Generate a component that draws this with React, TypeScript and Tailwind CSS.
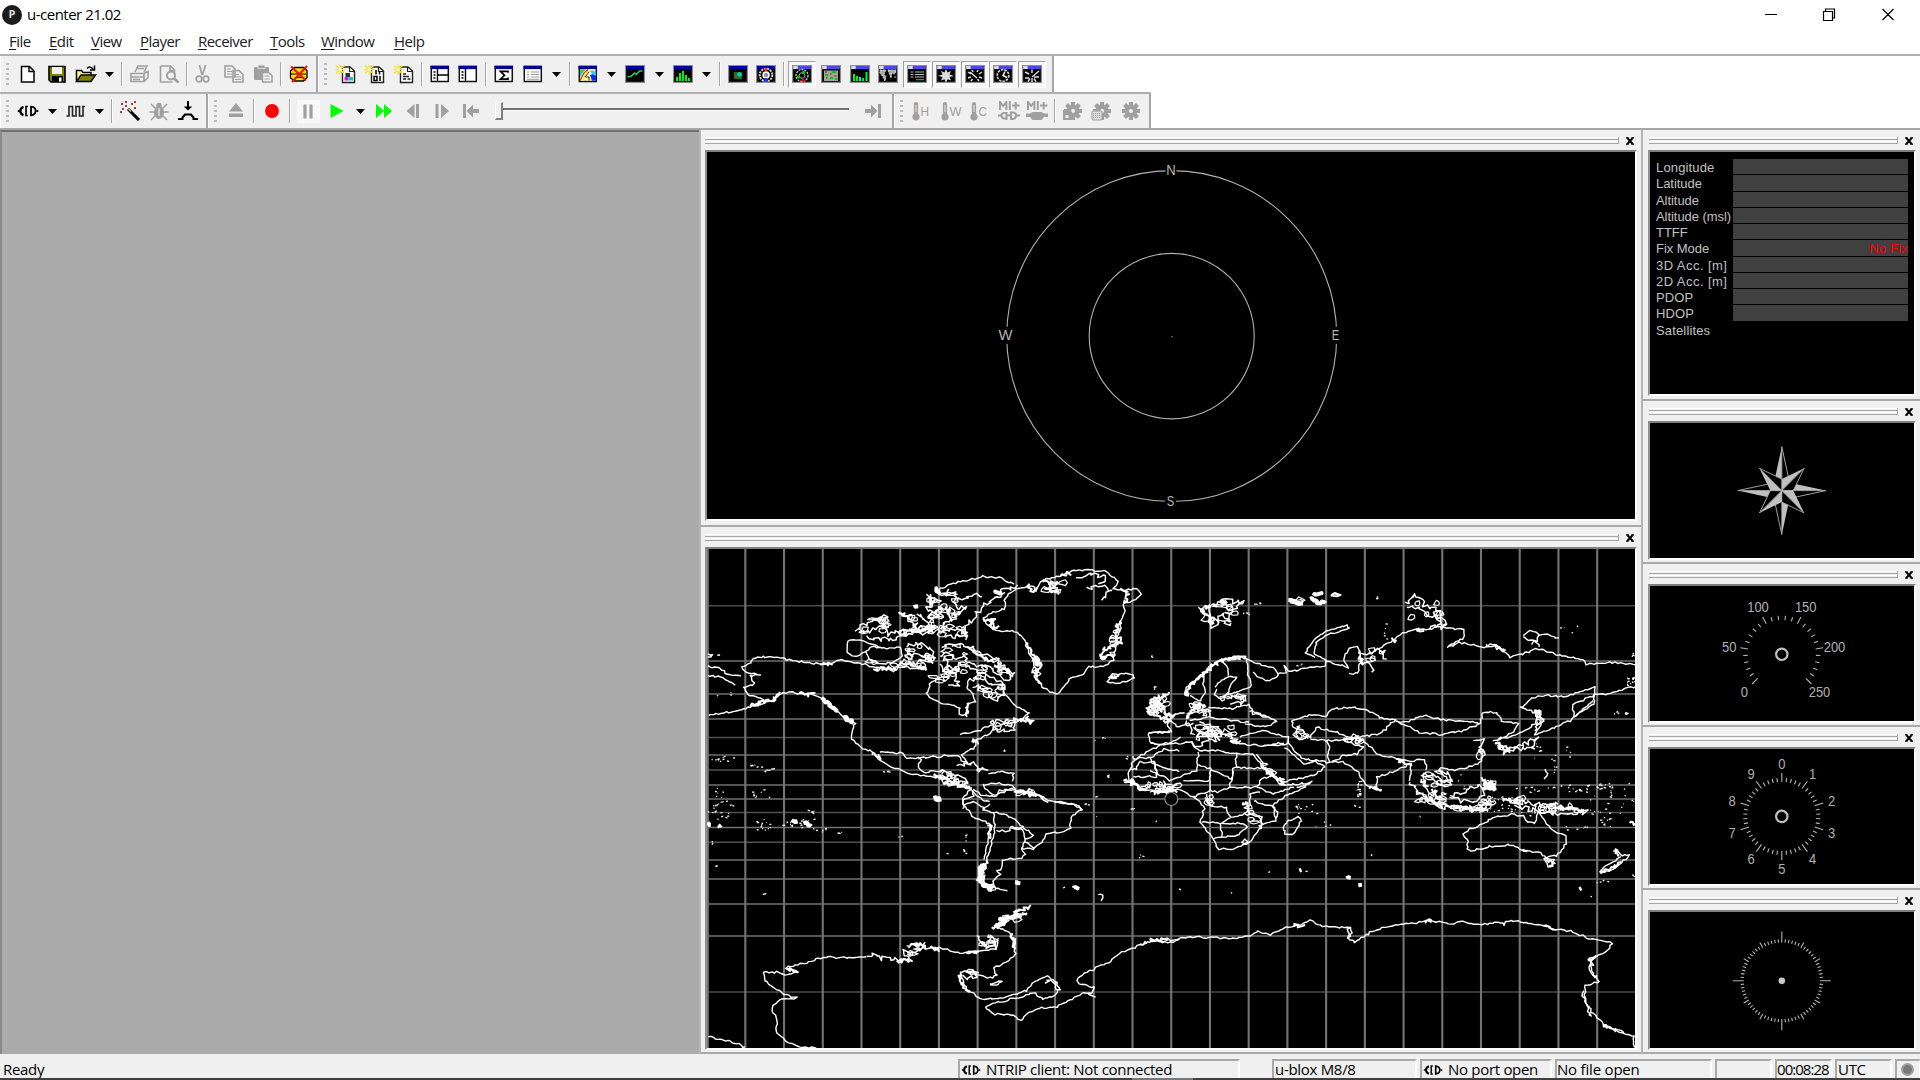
import React from "react";

/* ---------- helpers for the world map ---------- */

const makeRandom = (seed: number) => {
  let s = seed;
  return () => {
    s = (s * 1103515245 + 12345) % 2147483648;
    return s / 2147483648 - 0.5;
  };
};

/* Turns "x,y x,y | x,y x,y" polylines into a path with a jagged coast. */
const coast = (data: string, amp: number, step = 9) => {
  const rnd = makeRandom(data.length * 7 + 3);
  return data
    .split("|")
    .map((line) => {
      const pts = line.trim().split(/\s+/).map((p) => p.split(",").map(Number));
      let d = `M${pts[0][0]} ${pts[0][1]}`;
      for (let i = 1; i < pts.length; i++) {
        const [ax, ay] = pts[i - 1];
        const [bx, by] = pts[i];
        const n = Math.max(1, Math.round(Math.hypot(bx - ax, by - ay) / step));
        for (let k = 1; k <= n; k++) {
          const x = ax + ((bx - ax) * k) / n + rnd() * amp;
          const y = ay + ((by - ay) * k) / n + rnd() * amp;
          d += `L${x.toFixed(1)} ${y.toFixed(1)}`;
        }
      }
      return d;
    })
    .join("");
};

/* Small islands spread over boxes: [x, y, width, height, count]. */
const islets = (boxes: number[][]) => {
  const rnd = makeRandom(991);
  return boxes
    .map(([x, y, w, h, n]) =>
      Array.from({ length: n }, () => {
        const px = x + (rnd() + 0.5) * w;
        const py = y + (rnd() + 0.5) * h;
        return `M${px.toFixed(1)} ${py.toFixed(1)}l${(4 + rnd() * 6).toFixed(1)} ${(rnd() * 5).toFixed(1)}`;
      }).join("")
    )
    .join("");
};

/* Dense fjord and border areas: small closed loops inside boxes. */
const tangle = (boxes: number[][]) => {
  const rnd = makeRandom(4711);
  return boxes
    .map(([x, y, w, h, n]) =>
      Array.from({ length: Math.ceil(n * 0.75) }, () => {
        const cx = x + (rnd() + 0.5) * w;
        const cy = y + (rnd() + 0.5) * h;
        const rx = 10 + rnd() * 10;
        const ry = 7 + rnd() * 6;
        const pts = Array.from({ length: 7 }, (_, k) => {
          const a = (k / 7) * Math.PI * 2;
          const f = 1 + rnd() * 0.9;
          return `${(cx + Math.cos(a) * rx * f).toFixed(1)} ${(cy + Math.sin(a) * ry * f).toFixed(1)}`;
        });
        return `M${pts.join("L")}Z`;
      }).join("")
    )
    .join("");
};

type Tile = { at: string; line: string; rough?: string; heavy?: string; fat?: string; dots?: number[][]; knots?: number[][] };

const tiles: Tile[] = [
  {
    at: "translate(-7 -8.4) scale(0.33333)",
    line:
      "24,375 60,385 90,405 125,408 | 24,405 60,410 90,425 105,432 | 24,340 40,342 36,350 24,348 | 52,344 60,344 | 125,378 140,375 160,355 205,347 260,357 320,365 380,372 400,365 425,357 450,365 480,368 520,378 560,385 580,395 600,375 640,385 680,385 | 125,378 140,395 180,402 150,405 165,430 130,440 145,465 190,475 160,495 110,512 24,523 | 160,497 220,480 235,462 270,452 300,460 340,460 370,475 400,505 440,535 465,548 455,575 455,595 485,625 520,632 540,660 600,690 640,702 700,708 740,715 780,740 815,745 820,765 790,780 790,805 | 540,635 600,637 630,655 655,650 665,655 | 665,655 655,680 670,695 700,692 735,690 725,705 | 655,655 700,645 720,652 735,642 775,648 790,665 805,668 785,640 825,620 825,600 870,580 885,560 920,550 960,540 985,520 965,505 940,490 915,460 | 735,405 690,430 680,460 700,480 740,490 780,500 780,520 800,525 805,490 825,485 820,460 800,440 810,410 | 445,300 480,300 520,315 560,325 600,320 605,345 580,365 540,370 510,355 495,335 465,348 440,335 445,300 | 495,335 510,320 540,320 | 705,150 750,130 800,120 850,108 900,110 940,130 | 945,145 1000,135 1010,150 1025,120 1080,105 1130,88 1210,90 1255,120 1240,145 1270,150 1310,145 1322,160 1300,180 1270,190 1275,210 1262,240 1262,270 1250,290 1245,330 1240,360 1210,378 1165,380 1150,400 1110,412 1080,458 1050,455 1025,440 1010,410 1000,360 985,330 970,290 945,272 890,272 860,250 850,235 880,215 915,205 915,170 945,145 | 1220,425 1240,400 1300,400 1305,412 1260,428 1220,425 | 1415,540 1400,550 1415,572 1345,575 1350,608 1380,612 1415,605 1440,590 | 1380,615 1340,635 1300,660 1285,700 1290,725 1330,745 1400,755 1420,750 | 1290,685 1310,685 1315,665 1350,665 1420,690 1440,690 | 1300,708 1370,708 1362,660 | 1300,655 1360,650 1390,625 1440,630 | 850,735 890,728 940,735 950,750 1000,755 1040,775 1065,785 1110,788 1140,795 1145,810 | 865,700 900,692 940,700 940,720 | 820,745 850,765 890,765 900,750 945,745 | 780,582 840,568 880,550",
    rough:
      "885,160 915,150 945,140 | 915,155 860,190 830,215 815,240 800,260 800,295 | 465,272 500,245 560,225 565,245 500,275 470,272 | 500,285 540,297 600,290 600,275 570,280 560,260 | 600,215 630,235 650,260 610,270 605,285 640,275 | 680,160 700,175 685,200 700,215 720,200 730,235 | 715,160 760,160 765,200 800,205 770,220 755,250 725,250 | 705,150 740,165 750,150 | 770,180 820,165 845,165 | 720,265 780,270 795,290 730,285 | 650,220 680,240 700,270 660,280 640,250 | 620,320 650,310 680,315 700,335 690,360 660,350 620,330 | 725,320 760,310 810,315 850,340 890,360 940,400 920,420 900,400 860,380 820,370 790,350 760,350 735,335 725,350 | 735,345 745,380 770,385 790,370 830,395 870,405 915,440 | 720,370 740,395 760,405 780,430 750,430 | 810,415 850,420 880,430 915,435 915,460 890,475 860,460 850,445 820,435 | 600,370 640,370 680,350 700,365 | 720,690 760,700 800,720 790,740 750,720 720,712 | 770,675 820,670 860,690 830,685 | 870,545 900,540 940,545 940,565 890,568 870,545 | 1130,110 1170,95 1220,110 1200,130 | 1160,140 1200,135 1230,150 1210,175",
    heavy:
      "1340,515 1350,500 1370,510 1360,522 1340,515 | 1360,470 1380,470 1375,490 1390,500 | 1375,495 1400,520 1425,525 1395,545 | 1385,465 1405,455 | 1000,340 1020,370 1005,400 1020,430 | 985,310 1000,345 | 1260,240 1245,280 1265,300 1235,320 1210,325 1200,355 1240,345 | 1030,125 1070,130 1040,145 1080,155 | 1010,140 1000,150 980,135 | 1080,105 1115,95 | 1265,145 1285,155 1275,190 | 850,235 885,240 870,260 900,262 | 360,372 395,372 | 520,385 590,382 | 680,385 620,365 | 150,495 220,478 235,460 | 515,640 545,655 | 940,535 1000,545 980,530 | 800,490 800,520 | 815,600 835,605 | 700,705 760,712 | 1225,412 1260,405 | 960,755 1000,762 1030,768 | 520,240 560,232 | 600,215 620,225 | 630,270 700,270 | 740,200 755,240 | 690,165 690,205 | 885,372 935,402 | 800,320 880,365 | 300,460 340,462",
    fat: "365,472 395,500 410,512 | 430,530 460,545 | 1290,718 1300,726 | 705,775 720,775 | 645,192 652,198 | 705,145 720,155 | 885,157 905,157 | 1365,475 1368,492 | 1000,350 1015,375",
    knots: [[480, 235, 80, 45, 10], [600, 225, 110, 60, 22], [680, 160, 90, 90, 20], [715, 255, 85, 35, 9], [620, 310, 80, 50, 12], [735, 315, 60, 90, 14], [830, 350, 90, 60, 10], [820, 425, 90, 40, 8], [1010, 125, 80, 30, 5], [1235, 270, 20, 70, 7], [1000, 350, 15, 60, 5], [720, 695, 70, 40, 8], [880, 545, 60, 15, 5], [1350, 475, 50, 50, 6], [1310, 730, 110, 18, 7], [500, 360, 170, 20, 7], [700, 385, 80, 40, 6]],
    dots: [[35, 648, 70, 15, 10], [140, 672, 60, 10, 8], [190, 685, 30, 8, 6], [40, 740, 50, 55, 9], [150, 745, 60, 30, 8], [40, 450, 60, 40, 3], [1170, 592, 50, 12, 4], [1215, 702, 25, 10, 5], [520, 692, 60, 4, 4], [1270, 625, 30, 30, 4], [1340, 345, 15, 5, 2], [1350, 440, 15, 6, 4], [905, 630, 10, 3, 2]],
  },
  {
    at: "translate(443 -8.4) scale(0.33333)",
    line:
      "105,465 110,440 150,405 185,375 215,358 260,348 290,355 320,370 370,380 383,400 375,415 345,420 310,395 | 290,355 295,400 305,435 260,455 230,460 | 120,465 150,480 165,455 160,430 165,395 190,375 | 195,440 210,425 235,408 258,412 245,430 230,460 | 200,445 195,460 215,475 230,460 | 210,360 232,375 235,405 | 383,400 410,395 405,375 420,395 470,380 525,375 530,362 595,380 580,355 600,320 625,320 632,350 625,395 600,400 | 680,325 735,295 760,275 800,265 845,265 870,250 890,265 940,265 940,295 890,320 930,305 1000,320 1020,310 1050,320 1080,350 1120,340 1160,322 1230,345 1300,355 1310,370 1380,365 1457,370 | 495,350 465,340 490,295 530,270 590,255 598,265 540,280 500,305 490,335 530,362 | 1120,285 1140,270 1165,280 1160,300 1130,298 1120,285 | 1165,285 1190,280 1225,292 | 1145,312 1155,300 1170,318 | 1457,437 1400,450 1375,462 1340,460 1270,490 1270,530 1330,490 1335,440 1300,450 1250,468 1200,465 1160,465 1110,500 1150,515 1165,510 1175,545 1155,580 1190,570 1260,540 1275,525 1330,480 | 1165,520 1160,545 1130,570 1080,590 1030,600 | 970,600 1005,595 990,620 1005,640 990,665 950,680 915,688 875,680 865,690 900,720 905,735 870,735 850,715 820,700 825,740 850,770 | 425,540 470,525 530,525 545,505 605,500 650,505 690,530 735,540 690,580 620,590 590,590 560,575 500,560 480,590 460,570 430,560 425,540 | 735,540 770,545 820,525 880,538 950,540 990,550 940,570 870,582 810,575 760,550 735,540 | 990,550 1000,515 1040,515 1055,540 1105,550 1090,575 1040,600 | 580,665 600,675 620,690 650,735 680,742 680,710 750,685 780,670 785,700 780,720 | 640,600 680,640 740,655 790,660 825,655 830,690 | 415,600 430,630 460,655 500,660 530,665 580,665 | 320,640 345,680 395,725 440,715 490,705 525,680 495,662 460,670 430,640 405,620 | 340,615 400,605 | 530,600 540,625 530,645 540,665 | 480,595 530,600 590,600 | 590,600 640,620 620,640 580,645 545,665 | 270,590 330,570 380,580 415,590 410,612 340,615 270,610 255,600 | 285,550 330,560 370,550 378,540 330,520 300,510 | 0,755 50,750 65,745 95,750 130,770 165,800 150,845 190,895 205,925 250,925 290,910 320,880 335,850 380,840 370,795 400,770 450,745 485,725 400,735 345,690 310,640 240,640 220,630 150,630 130,620 125,605 60,610 0,610 | 0,690 60,720 140,690 145,635 | 20,705 15,665 0,655 | 145,672 180,685 245,715 250,685 260,680 258,640 | 260,682 345,682 | 250,690 240,740 200,755 180,750 130,770 | 100,720 180,720 182,690 | 180,720 180,755 | 240,740 320,740 330,720 370,700 | 320,740 370,760 430,740 | 330,755 300,760 300,790 285,820 240,830 230,800 180,795 170,760 | 155,845 210,848 240,830 | 210,848 218,890 190,895 | 218,890 260,885 290,860 280,848 215,850 | 275,905 285,898 292,906 282,912 275,905 | 285,820 330,830 335,850 | 370,800 310,780 | 440,740 470,735 | 410,845 445,828 455,840 430,880 405,880 400,860 410,845 | 940,880 960,865 1000,850 1030,830 1085,822 1120,825 1125,840 1155,850 1165,815 1190,850 1215,875 1245,885 1250,910 1220,945 1190,950 1165,935 1130,930 1110,925 1080,912 1020,918 965,930 950,925 955,905 940,880 | 1180,955 1210,955 1205,975 1195,978 1180,955 | 1395,925 1415,945 1440,945 1385,990 1350,995 1355,985 1410,950 | 1155,790 1155,820 | 175,500 240,505 300,490 310,520 370,535 | 110,520 175,505 180,530 120,540 | 180,530 250,540 300,545 | 75,520 105,515 | 60,575 0,575 | 60,535 80,560 130,550 | 1185,685 1195,700 1180,718",
    rough:
      "145,200 180,200 190,260 210,220 240,245 230,215 270,195 280,185 220,180 200,195 160,205 | 160,220 200,240 250,250 | 765,185 800,165 820,195 870,210 875,240 830,220 800,200 770,205 | 630,330 660,345 680,325 705,335 705,355 | 625,360 660,375 670,390 | 850,215 880,235 890,262 840,260 | 1010,310 1060,330 | 130,560 160,580 200,600 190,560 230,580 260,600 | 150,545 200,555 220,585 170,570 | 110,540 130,580 | 125,610 150,620 170,600 | 450,555 430,580 460,595 480,590 | 780,725 800,750 840,785 880,800 940,805 1010,812 | 800,755 840,770 875,795 820,770 | 900,765 950,755 990,730 1000,750 985,785 930,780 900,765 | 1000,780 1020,790 1010,805 | 1090,780 1150,790 1230,800 1310,815 1250,815 1200,820 1160,810 1100,795 | 870,685 890,700 910,720 870,720 850,700 | 1060,635 1090,625 1150,620 1160,590 1140,605 1080,625 1060,635 | 1155,515 1180,540 1150,570 | 230,470 290,470 280,490 240,490 | 290,790 300,820 330,820 330,870 | 165,770 185,800 | 40,720 40,750 80,730 | 1170,805 1230,790 | 370,800 380,835",
    heavy:
      "110,450 150,405 210,360 290,350 | 130,490 165,495 | 140,500 110,530 | 0,490 20,480 40,510 | 0,515 40,535 60,520 | 580,595 620,590 640,605 | 740,655 780,672 | 1020,720 1030,745 1000,715 | 845,745 870,775 | 725,295 740,305 | 800,265 820,270 | 1040,315 1060,330 | 630,345 640,370 | 1040,605 1060,625 | 1060,640 1080,625 | 395,715 400,730 | 280,785 300,790 | 660,740 690,745 | 1120,925 1135,930 | 860,790 1010,808 | 1060,775 1110,785 | 1440,848 1457,852 | 1395,925 1405,945 | 1200,795 1300,812 | 170,560 205,595 | 240,600 270,605 | 815,715 830,740 | 345,685 400,728",
    fat: "480,175 525,190 | 490,165 515,160 | 415,178 455,188 | 210,185 230,185 | 150,210 165,215 | 175,240 190,250 | 1000,725 1035,745 | 1000,745 1030,740 | 745,660 755,665 | 107,452 115,462 | 130,495 150,500 | 10,480 20,492 | 245,605 265,600 | 1155,515 1165,515 | 1395,928 1400,932",
    knots: [[150, 195, 110, 50, 8], [430, 175, 20, 10, 3], [550, 158, 10, 8, 2], [650, 325, 50, 40, 5], [775, 185, 100, 55, 7], [115, 480, 60, 50, 8], [130, 550, 120, 45, 16], [200, 465, 85, 28, 6], [5, 475, 30, 40, 5], [445, 565, 30, 25, 4], [590, 585, 45, 20, 5], [825, 695, 70, 40, 8], [845, 750, 35, 35, 6], [805, 760, 60, 20, 5], [995, 760, 30, 40, 7], [1010, 720, 20, 20, 5], [1045, 772, 70, 15, 5], [885, 798, 120, 8, 6], [1150, 795, 140, 18, 9], [1045, 610, 30, 20, 4], [1160, 520, 12, 40, 4], [985, 605, 10, 50, 3], [170, 770, 15, 20, 3], [5, 730, 80, 15, 6], [295, 795, 30, 55, 5], [335, 650, 50, 60, 3]],
    dots: [[305, 185, 50, 8, 4], [620, 720, 12, 50, 18], [430, 790, 70, 30, 12], [700, 245, 10, 60, 5], [1190, 620, 80, 90, 12], [1140, 600, 40, 70, 6], [1080, 735, 240, 20, 26], [1320, 730, 130, 90, 26], [1340, 730, 50, 15, 12], [1350, 820, 30, 40, 10], [1240, 855, 80, 15, 6], [1390, 515, 60, 6, 8], [1230, 255, 60, 22, 4], [490, 840, 70, 20, 4], [430, 370, 25, 6, 3], [1010, 770, 100, 45, 26], [1110, 775, 100, 50, 16], [920, 700, 30, 60, 5], [655, 940, 10, 8, 2], [610, 795, 20, 8, 3], [800, 825, 15, 4, 2], [1430, 410, 25, 30, 14], [1445, 340, 12, 10, 6], [270, 215, 25, 6, 4], [675, 168, 6, 6, 4]],
  },
  {
    at: "translate(-7 231.600) scale(0.33333)",
    line:
      "815,20 790,55 790,75 820,110 870,130 865,180 850,240 | 1065,63 1110,68 1145,85 1112,110 1110,140 1090,152 1040,160 1030,180 1000,205 965,205 975,220 965,230 930,235 910,240 905,265 890,270 900,280 880,300 885,325 920,328 | 880,95 885,150 870,200 860,245 | 790,75 820,65 845,75 850,90 905,98 950,120 968,140 930,140 930,152 890,150 | 930,140 970,150 975,175 1000,165 985,150 965,140 | 975,175 965,205 | 975,185 1000,200 | 870,70 850,85 | 850,10 860,30 890,45 940,20 | 815,30 840,55 870,65 | 190,575 240,575 265,585 290,570 255,562 320,545 370,530 440,532 500,527 | 190,575 195,600 250,640 290,652 240,658 215,680 230,720 230,755 260,785 300,800 350,802 | 24,768 100,785 136,800 | 640,505 720,500 780,518 840,510 890,505 895,470 | 895,440 930,455 945,490 945,520 920,545 880,562 890,585 870,592 840,585 820,570 | 780,575 800,625 840,655 900,652 980,630 1000,605 1040,585 1070,605 1080,625 1065,645 1030,655 1000,635 960,650 870,670 855,680 880,700 940,702 960,718 1010,682 1070,680 1110,660 1145,637 1175,640 1180,620 1135,610 1130,600 1160,575 1225,545 1265,515 1320,495 1340,485 1400,475 1415,488 1440,478 | 870,610 905,600 885,615 870,610 | 1195,342 1210,345 1205,362 | 335,92 345,98",
    rough:
      "500,527 530,520 545,535 570,530 600,540 630,540 605,515 640,510 680,500 | 620,495 670,490 | 830,465 850,490 890,500 880,475 860,460 | 780,575 820,575 830,590 790,590 | 1035,608 1060,605 1080,625 | 950,35 1000,40 1040,60 | 1165,640 1180,645 | 1320,490 1345,485 | 845,490 870,500",
    heavy:
      "260,565 290,570 | 590,540 635,540 | 630,490 675,495 | 875,440 910,430 | 780,580 785,610 805,635 | 895,445 905,420 985,395 | 940,395 995,380 | 730,5 815,20 | 870,130 870,170 | 860,240 845,280 | 935,460 945,510 | 1380,475 1400,478 | 690,502 715,508 | 800,515 835,512 | 945,30 1000,40 | 1270,0 1300,10 1340,30 | 1360,35 1430,30",
    fat: "848,250 838,290 850,315 | 842,280 850,310 880,330 | 840,260 845,300 | 900,420 960,402 | 885,440 920,420 | 700,52 720,56 | 275,118 290,122 | 310,128 335,135 | 60,140 65,130 | 24,125 30,135 | 945,305 960,307 | 1120,322 1135,325 | 1292,0 1300,4",
    knots: [[842, 255, 8, 50, 4], [855, 318, 22, 8, 3], [845, 470, 35, 25, 5], [615, 498, 45, 28, 4], [900, 410, 55, 12, 4], [955, 32, 40, 8, 4], [755, 2, 50, 10, 3], [802, 570, 18, 10, 2]],
    dots: [[24, 60, 80, 60, 18], [150, 115, 200, 35, 26], [360, 145, 20, 15, 5], [400, 155, 50, 4, 4], [40, 255, 12, 6, 3], [185, 338, 10, 3, 2], [720, 180, 80, 40, 5], [560, 168, 45, 4, 2], [790, 165, 8, 5, 2], [1085, 318, 60, 8, 4], [1310, 218, 20, 15, 3], [1290, 85, 10, 4, 2], [1150, 70, 14, 4, 3], [1365, 120, 6, 3, 1], [24, 180, 15, 12, 3], [1185, 48, 5, 90, 2], [320, 88, 20, 8, 3], [270, 115, 70, 20, 10]],
  },
  {
    at: "translate(443 311.600) scale(0.33333)",
    line:
      "0,240 60,245 90,232 150,230 250,233 300,225 325,212 360,225 400,203 450,195 480,180 520,198 600,202 605,215 590,230 615,245 660,215 720,195 800,187 840,180 905,190 940,182 970,192 1020,190 1035,183 1065,192 1068,182 1105,182 1190,195 1220,208 1260,210 1320,235 1385,247 1370,272 1320,295 1320,330 1350,362 1305,375 1305,425 1330,460 1360,490 1400,510 1452,528 1452,560",
    rough: "0,240 45,240 | 1320,295 1335,290 1320,320 1340,355 | 1302,390 1305,425 1325,462 1310,460 | 1360,490 1395,508 1420,515 | 600,202 595,230 | 1180,195 1215,205",
    heavy: "825,182 848,180 | 430,197 460,193 | 1185,0 1210,5 1200,18 | 1350,35 1375,30 1410,5 | 1360,495 1370,497 | 1315,295 1325,300",
    fat: "592,45 602,50 | 625,74 632,76 | 1288,86 1293,86 | 448,30 452,30",
    dots: [[85, 84, 8, 3, 2], [242, 95, 5, 2, 1], [352, 34, 6, 2, 1], [460, 30, 10, 2, 1], [1340, 60, 35, 10, 4], [1320, 105, 5, 2, 1], [1445, 42, 8, 8, 3]],
  },
];

const meridians = Array.from({ length: 24 }, (_, i) => (i === 0 ? 0.8 : -0.4 + i * 38.72));
const parallels: [number, string][] = [
  [56.8, "#4a4a4a"], [111.9, "#707070"], [144.9, "#707070"], [169.9, "#707070"], [188.6, "#505050"],
  [205.9, "#707070"], [220.9, "#505050"], [235.9, "#707070"], [249.9, "#707070"], [263.6, "#505050"],
  [278.6, "#707070"], [293.3, "#505050"], [310.9, "#707070"], [329.9, "#707070"], [354.9, "#707070"],
  [386.9, "#707070"], [442.9, "#4a4a4a"],
];

function WorldMap() {
  return (
    <svg className="block h-full w-full" viewBox="0 0 928 499" preserveAspectRatio="none" fill="none">
      {parallels.map(([y, c]) => (
        <line key={y} x1="0" x2="928" y1={y} y2={y} stroke={c} strokeWidth="1.5" />
      ))}
      {meridians.map((x) => (
        <line key={x} x1={x} x2={x} y1="0" y2="499" stroke="#747474" strokeWidth="2.1" />
      ))}
      {tiles.map((t) => (
        <g key={t.at} transform={t.at} stroke="#fff" strokeLinejoin="round">
          <path d={coast(t.line, 6, 8)} strokeWidth="4.2" />
          {t.rough && <path d={coast(t.rough, 15, 7)} strokeWidth="4.4" />}
          {t.knots && <path d={tangle(t.knots)} strokeWidth="3.6" />}
          {t.heavy && <path d={coast(t.heavy, 13, 4)} strokeWidth="6" />}
          {t.fat && <path d={coast(t.fat, 9, 5)} strokeWidth="12" />}
          {t.dots && <path d={islets(t.dots)} strokeWidth="3.8" />}
        </g>
      ))}
      <circle cx="464.3" cy="250" r="6.5" fill="#000" stroke="#8a8a8a" strokeWidth="1.2" />
    </svg>
  );
}

/* ---------- gauges ---------- */

const polar = (cx: number, cy: number, r: number, deg: number) => {
  const a = (deg * Math.PI) / 180;
  return [cx + r * Math.sin(a), cy - r * Math.cos(a)];
};

const tick = (cx: number, cy: number, r1: number, r2: number, deg: number) => {
  const [a, b] = polar(cx, cy, r1, deg);
  const [c, d] = polar(cx, cy, r2, deg);
  return `M${a.toFixed(2)} ${b.toFixed(2)}L${c.toFixed(2)} ${d.toFixed(2)}`;
};

function Num({ x, y, v }: { x: number; y: number; v: string }) {
  return (
    <text x={x} y={y + 5.3} fontSize="15.5" textAnchor="middle" textLength={v.length * 7.2} lengthAdjust="spacingAndGlyphs" fill="#b0b0b0" fontFamily="'Liberation Sans', sans-serif">
      {v}
    </text>
  );
}

function Gauge({ children }: { children: React.ReactNode }) {
  return (
    <svg className="block h-full w-full" viewBox="0 0 264 135" preserveAspectRatio="none" fill="none">
      {children}
    </svg>
  );
}

function Compass() {
  const cx = 131.8, cy = 67.6;
  const shape: React.ReactNode[] = [];
  [0, 90, 180, 270].forEach((a) => {
    const tip = polar(cx, cy, 44, a), l = polar(cx, cy, 15, a - 26), r = polar(cx, cy, 15, a + 26);
    shape.push(<polygon key={`l${a}`} points={`${tip} ${l} ${cx},${cy}`} fill="#c0c0c0" />);
    shape.push(<polygon key={`r${a}`} points={`${tip} ${r} ${cx},${cy}`} fill="#000" stroke="#b0b0b0" strokeWidth="0.9" />);
  });
  [45, 135, 225, 315].forEach((a) => {
    const tip = polar(cx, cy, 31.6, a), l = polar(cx, cy, 11.5, a - 45), r = polar(cx, cy, 11.5, a + 45);
    shape.push(<polygon key={`dl${a}`} points={`${tip} ${l} ${cx},${cy}`} fill="#c0c0c0" />);
    shape.push(<polygon key={`dr${a}`} points={`${tip} ${r} ${cx},${cy}`} fill="#000" stroke="#b0b0b0" strokeWidth="0.9" />);
  });
  return <Gauge>{shape}</Gauge>;
}

function Speed() {
  const cx = 131.8, cy = 68.3;
  const d = Array.from({ length: 26 }, (_, i) => tick(cx, cy, 34.2, i % 5 === 0 ? 42 : 38.6, -135 + i * 10.8)).join("");
  return (
    <Gauge>
      <path d={d} stroke="#b4b4b4" strokeWidth="1.1" />
      <circle cx={cx} cy={cy} r="5.7" stroke="#c0c0c0" strokeWidth="2.2" />
      <Num x={94.3} y={105.8} v="0" />
      <Num x={79.3} y={61} v="50" />
      <Num x={108} y={21} v="100" />
      <Num x={155.7} y={21} v="150" />
      <Num x={184.5} y={61} v="200" />
      <Num x={169.5} y={105.8} v="250" />
    </Gauge>
  );
}

function Clock() {
  const cx = 131.8, cy = 67.4;
  const d = Array.from({ length: 50 }, (_, i) => tick(cx, cy, 34.5, i % 5 === 0 ? 43.5 : 38.6, i * 7.2)).join("");
  return (
    <Gauge>
      <path d={d} stroke="#b4b4b4" strokeWidth="1.1" />
      <circle cx={cx} cy={cy} r="5.7" stroke="#c0c0c0" strokeWidth="2.2" />
      {Array.from({ length: 10 }, (_, i) => {
        const [x, y] = polar(cx, cy, 52.3, i * 36);
        return <Num key={i} x={x} y={y} v={String(i)} />;
      })}
    </Gauge>
  );
}

function Bearing() {
  const cx = 131.8, cy = 68.3;
  const d = Array.from({ length: 72 }, (_, i) => tick(cx, cy, 38, i % 18 === 0 ? 49 : i % 6 === 0 ? 44 : 41.3, i * 5)).join("");
  return (
    <Gauge>
      <path d={d} stroke="#b4b4b4" strokeWidth="1.1" />
      <circle cx={cx} cy={cy} r="3.3" fill="#c8c8c8" />
    </Gauge>
  );
}

function Sky() {
  const cx = 464.7, cy = 183.6;
  return (
    <svg className="block h-full w-full" viewBox="0 0 928 366" preserveAspectRatio="none" fill="none">
      <circle cx={cx} cy={cy} r="165" stroke="#b0b0b0" strokeWidth="1.1" />
      <circle cx={cx} cy={cy} r="82.5" stroke="#b0b0b0" strokeWidth="1.1" />
      <rect x={cx - 0.5} y={cy} width="1.4" height="1.2" fill="#888" />
      {([["N", 464, 17.5], ["S", 463.5, 347.5], ["W", 298.5, 182.3], ["E", 628.5, 182.3]] as [string, number, number][]).map(([t, x, y]) => (
        <React.Fragment key={t}>
          <rect x={x - 5.5} y={y - 8} width="11" height="17" fill="#000" />
          <text x={x} y={y + 5.3} fontSize="15.5" textAnchor="middle" textLength={t === "W" ? 14 : t === "N" ? 9.5 : 7.5} lengthAdjust="spacingAndGlyphs" fill="#b4b4b4" fontFamily="'Liberation Sans', sans-serif">
            {t}
          </text>
        </React.Fragment>
      ))}
    </svg>
  );
}

/* ---------- docking panel ---------- */

function Dock({ className, tight, body, children }: { className: string; tight?: boolean; body: string; children: React.ReactNode }) {
  return (
    <section className={`flex flex-col border-b-2 border-l-2 border-b-[#a9a9a9] border-l-[#b4b4b4] bg-[#f0f0f0] ${className}`}>
      <header className={`flex h-5 shrink-0 items-center gap-[6px] pt-px pr-1.5 ${tight ? "pl-[6px]" : "pl-1"}`}>
        <div className="flex h-[7px] flex-1 flex-col justify-between border-r border-[#a9a9a9]">
          <div className="h-[3px] border-t border-b border-t-white border-b-[#a6a6a6]" />
          <div className="h-[3px] border-t border-b border-t-white border-b-[#a6a6a6]" />
        </div>
        <svg className="h-[8px] w-[10px]" viewBox="0 0 10 8" stroke="#000">
          <path d="M2.3 1L7.7 7M7.7 1L2.3 7" strokeWidth="1.9" />
          <path d="M1 .9h2.6M6.4 .9H9M1 7.1h2.6M6.4 7.1H9" strokeWidth="1.1" />
        </svg>
      </header>
      <div className={`mr-1 min-h-0 flex-1 ${body} border-t-2 border-r-2 border-b-2 border-l-2 border-t-[#808080] border-r-white border-b-white border-l-[#909090] bg-black`}>
        {children}
      </div>
    </section>
  );
}

const fields = ["Longitude", "Latitude", "Altitude", "Altitude (msl)", "TTFF", "Fix Mode", "3D Acc. [m]", "2D Acc. [m]", "PDOP", "HDOP", "Satellites"];

function DataView() {
  return (
    <div className="flex flex-col pt-[7px] pr-1.5 pl-[6px] font-['Liberation_Sans',sans-serif] text-[13px] text-[#c0c0c0]">
      {fields.map((f, i) => (
        <div key={f} className="flex h-[16.25px] items-start">
          <span className={`w-[77px] shrink-0 leading-[17px] whitespace-nowrap ${f.includes("Acc") ? "tracking-[0.45px]" : f === "Longitude" || f === "Satellites" || f === "PDOP" || f === "HDOP" ? "tracking-[0.15px]" : "tracking-[-0.05px]"}`}>{f}</span>
          {i < 10 && (
            <span className="h-[15.25px] flex-1 overflow-hidden bg-[#404040] text-right leading-[17px] tracking-[0.2px] text-[#f00000]">
              {f === "Fix Mode" ? "No Fix" : null}
            </span>
          )}
        </div>
      ))}
    </div>
  );
}

/* ---------- toolbar pieces ---------- */

function Grip() {
  return (
    <div className="flex w-[12.9px] shrink-0 flex-col items-center justify-center gap-[3px]">
      {[0, 1, 2, 3, 4].map((i) => (
        <i key={i} className="h-[2px] w-[3px] bg-[#bcbcbc]" />
      ))}
    </div>
  );
}

const Sep = () => (
  <div className="flex w-[7.2px] shrink-0 items-center justify-center">
    <i className="h-6 w-[2px] border-r border-r-white bg-[#a6a6a6]" />
  </div>
);

function Tool({ on, flat, children }: { on?: boolean; flat?: boolean; children: React.ReactNode }) {
  return (
    <div className="flex w-[28.75px] shrink-0 items-center justify-center">
      <div
        className={
          on
            ? "flex h-[27px] w-[28px] items-center justify-center border-t border-r border-b border-l border-t-[#a0a0a0] border-r-white border-b-white border-l-[#a0a0a0] bg-[#f7f7f7]"
            : flat
              ? "flex h-[23px] w-[23px] items-center justify-center bg-[#f8f8f8]"
              : "flex"
        }
      >
        <svg className="h-[20px] w-[22px] shrink-0" viewBox="0 0 22 20" fill="none">
          {children}
        </svg>
      </div>
    </div>
  );
}

const Drop = () => (
  <div className="flex w-[18.75px] shrink-0 items-center justify-center">
    <svg className="h-[5px] w-[9px]" viewBox="0 0 9 5">
      <path d="M0 0h9L4.5 5z" fill="#000" />
    </svg>
  </div>
);

function Bar({ className, children }: { className: string; children: React.ReactNode }) {
  return <div className={`flex shrink-0 border-r-2 border-l border-r-[#a6a6a6] border-l-white bg-[#f0f0f0] ${className}`}>{children}</div>;
}

const G = "#a0a0a0";

const Page = () => (
  <g>
    <path d="M4.5 2.5h8l4.5 4.5v11H4.5z" fill="#fff" stroke="#000" strokeWidth="1.5" />
    <path d="M12 2.5v5h5" stroke="#000" strokeWidth="1.4" />
  </g>
);

const StarPage = ({ children }: { children: React.ReactNode }) => (
  <g>
    <path d="M7.5 3H15l4.5 4v11.5H7.5z" fill="#fff" stroke="#222" strokeWidth="1.4" />
    <path d="M14.5 3v4.5h5" stroke="#222" strokeWidth="1.2" />
    <path d="M1 1.5l8 8M9.5 1.5L1 9.5M5.2 .5v10M.5 5.5h10" stroke="#f0e830" strokeWidth="1.5" />
    <path d="M5.2 4v3M3.7 5.5h3" stroke="#fff" strokeWidth="1.5" />
    {children}
  </g>
);

const Frame = ({ children }: { children: React.ReactNode }) => (
  <g>
    <rect x="2.3" y="2.5" width="17" height="15" fill="#fff" stroke="#111" strokeWidth="1.5" />
    <rect x="1.5" y="1.8" width="18.5" height="3.3" fill="#000090" />
    {children}
  </g>
);

const Dark = ({ soft, children }: { soft?: boolean; children: React.ReactNode }) => (
  <g>
    <rect x="1.6" y="1.6" width="18.8" height="16.8" fill="#000" stroke="#8c8c8c" strokeWidth="1.2" />
    <rect x="2.2" y="2" width="17.6" height="3.2" fill={soft ? "#4a4ae0" : "#0000a0"} />
    {soft && <path d="M2.2 3.5h4.5" stroke="#ddd" strokeWidth="3" />}
    {children}
  </g>
);

const Plug = () => (
  <g>
    <path d="M.8 10h2M19.300 10h2" stroke="#000" strokeWidth="1.800" />
    <path d="M6.500 5.800Q3.300 7 3.300 10t3.200 4.200" stroke="#000" strokeWidth="2.300" />
    <path d="M10.800 5.500H9v9h1.800M9 10h1" stroke="#000" strokeWidth="1.600" />
    <path d="M14 5.700Q18.600 6.200 18.600 10T14 14.300z" stroke="#000" strokeWidth="1.800" fill="#f0f0f0" />
  </g>
);

const Thermo = ({ t }: { t: string }) => (
  <g>
    <path d="M5 3v12" stroke={G} strokeWidth="4.2" strokeLinecap="round" />
    <circle cx="5" cy="15.8" r="3.6" fill={G} />
    <path d="M5 4v7" stroke="#e8e8e8" strokeWidth="1" />
    <text x="9.5" y="14.5" fontSize="13" textLength={t === "W" ? 12 : 8.5} lengthAdjust="spacingAndGlyphs" fill={G} fontFamily="'Liberation Sans', sans-serif">{t}</text>
  </g>
);

const MPlus = () => (
  <path d="M2 9V1l3.200 4L8.400 1v8M11.800 0v9M14 4.500h7.500M17.700 1v7.500" stroke={G} strokeWidth="2" />
);

const Gear = () => (
  <g>
    <path d="M11 1v18M2 10h18M4.600 3.600l12.800 12.800M17.400 3.600L4.600 16.400" stroke={G} strokeWidth="4.2" />
    <circle cx="11" cy="10" r="6.3" fill={G} />
    <circle cx="11" cy="10" r="2" fill="#f0f0f0" />
  </g>
);

function ToolRowOne() {
  return (
    <div className="flex h-[38px] shrink-0 border-t-2 border-t-[#b0b0b0] bg-white">
      <div className="flex">
        <Bar className="w-[318px]">
          <Grip />
          <Tool><Page /></Tool>
          <Tool>
            <path d="M3 2.500h16v15.500H5l-2-2z" fill="#808000" stroke="#000" strokeWidth="1.6" />
            <rect x="6" y="3" width="10" height="7" fill="#f0f0f0" />
            <rect x="6" y="12" width="11" height="6" fill="#000" />
            <rect x="13" y="13.5" width="2.5" height="4" fill="#fff" />
          </Tool>
          <Tool>
            <path d="M1.500 17V6.500h5l1.500 2h8V11" fill="#ffff80" stroke="#000" strokeWidth="1.5" />
            <path d="M1.500 17.500L6 11h14.500L16 17.500z" fill="#808000" stroke="#000" strokeWidth="1.5" />
            <path d="M12 4.500q3-3 6 .5M19.500 1.500v4.500h-4.500" stroke="#000" strokeWidth="1.5" />
          </Tool>
          <Drop />
          <Sep />
          <Tool>
            <path d="M6 8l3-6h9l-3 6M2 9.500h13l4-2v6l-4 4H2zM2 13h13M15 9.500v8M4 15.500h7M8 4.500h7" stroke={G} strokeWidth="1.6" />
          </Tool>
          <Tool>
            <path d="M2.500 2h10l4 4v3M2.500 2v16h12M12 2v4.500h4.500" stroke={G} strokeWidth="1.6" />
            <circle cx="13" cy="11.5" r="4" stroke={G} strokeWidth="2" />
            <path d="M16 14.500l4.500 4" stroke={G} strokeWidth="2.8" />
          </Tool>
          <Sep />
          <Tool>
            <path d="M5.500 1L8 11M11.500 1l-3 10" stroke={G} strokeWidth="1.7" />
            <circle cx="5" cy="15" r="2.8" stroke={G} strokeWidth="1.7" />
            <circle cx="12" cy="15" r="2.8" stroke={G} strokeWidth="1.7" />
          </Tool>
          <Tool>
            <path d="M2 2h7l3 3v8H2zM10 6.500h6l4 4V18H10z" fill="#f0f0f0" stroke={G} strokeWidth="1.6" />
            <path d="M4 5h4M4 7.500h5M4 10h5M12 10.500h4M12 13h6M12 15.500h6" stroke={G} strokeWidth="1.2" />
          </Tool>
          <Tool>
            <rect x="2" y="3" width="15" height="13" rx="1" fill={G} />
            <rect x="6" y="1" width="7" height="3.5" fill={G} stroke="#f0f0f0" strokeWidth=".7" />
            <path d="M10.500 8.500h6l3.500 3V18h-9.500z" fill="#f0f0f0" stroke={G} strokeWidth="1.5" />
            <path d="M12.500 12h5M12.500 15h5" stroke={G} />
          </Tool>
          <Sep />
          <Tool>
            <path d="M2.500 7l4-3.500h9l3.500 3v7l-3.500 3.500h-9L2.500 14z" fill="#ffe000" stroke="#000" strokeWidth="1.3" />
            <path d="M3 10h15M7 13.500h8" stroke="#000" strokeWidth="1.2" />
            <path d="M3 2.500l15 14M19 2L4 18" stroke="#f01000" strokeWidth="2.1" />
          </Tool>
        </Bar>
        <Bar className="w-[736px]">
          <Grip />
          <Tool><StarPage><rect x="10.5" y="9" width="4.5" height="4" fill="#333" /><rect x="9.5" y="13" width="4" height="3.5" fill="#f0f" /><rect x="13.5" y="13" width="4.5" height="3.5" fill="#0cc" /></StarPage></Tool>
          <Tool><StarPage><path d="M12 6v4.500M10 12.500h3v4h-3zM16 12v5M15.500 7v3.500" stroke="#000" strokeWidth="1.5" /></StarPage></Tool>
          <Tool><StarPage><path d="M10 10h3M10 12.500h6M10 15h3M14.500 15h3" stroke="#222" strokeWidth="1.3" /></StarPage></Tool>
          <Sep />
          <Tool><Frame><path d="M8.500 5v12M8.500 11h11M4.500 8h2M4.500 11h2M4.500 14h2" stroke="#000" strokeWidth="1.4" /></Frame></Tool>
          <Tool><Frame><path d="M8.500 5v12M4.500 8h2M4.500 11h2M4.500 14h2" stroke="#000" strokeWidth="1.4" /></Frame></Tool>
          <Sep />
          <Tool><Frame><path d="M15 8.800V7.300H7.500l4 4-4 3.800H15v-1.500" stroke="#000" strokeWidth="1.7" /></Frame></Tool>
          <Tool><Frame><path d="M5 8h2M9 8h8M5 10.500h2M9 10.500h8M5 13h2M9 13h8M5 15.300h12" stroke="#999" strokeWidth="1" /></Frame></Tool>
          <Drop />
          <Sep />
          <Tool><Frame>
            <path d="M3 5.100h6L3 12z" fill="#50d040" />
            <path d="M3 9l3-1-3 6z" fill="#20c8f0" />
            <path d="M3 16.700L7 9l4-3.500" stroke="#e03020" strokeWidth="1.3" />
            <path d="M4 16.700L8 9l5-3.500h2L9 12l-2 4.700z" fill="#fff04a" />
            <path d="M10 16.700l1-5 3-1 1 5.900z" fill="#fff04a" />
            <path d="M13 7q5-2 6 3l-3 1z" fill="#20d0f0" />
            <path d="M13 11q3-2 6 1v4.700h-4z" fill="#0030ff" />
            <path d="M12 8l-4 5h4v3.500" stroke="#222" strokeWidth=".9" />
          </Frame></Tool>
          <Drop />
          <Tool><Dark><path d="M3.500 13l4-1 3-3 2 1.500 3-3.500h3" stroke="#20d070" strokeWidth="1.5" /></Dark></Tool>
          <Drop />
          <Tool><Dark><path d="M5 17v-4M8 17V9M11 17V7M14 17v-6M17 17v-3" stroke="#00f020" strokeWidth="2.1" /></Dark></Tool>
          <Drop />
          <Sep />
          <Tool><Dark><rect x="7" y="8" width="8" height="7" fill="#107818" /><circle cx="12.5" cy="10.5" r="2.3" fill="#10c8d0" /><rect x="7" y="11" width="3" height="3" fill="#b03010" /></Dark></Tool>
          <Tool><Dark><circle cx="11" cy="11" r="6.3" stroke="#ddd" strokeWidth="2" strokeDasharray="2 1" /><circle cx="11" cy="11" r="3" fill="#999" stroke="#fff" strokeWidth="1.5" /><circle cx="11" cy="5.5" r="1.7" fill="#f03020" /><circle cx="11" cy="16" r="2" fill="#1030ff" /></Dark></Tool>
          <Sep />
          <Tool on><Dark soft><circle cx="11" cy="11.5" r="6" stroke="#ccc" strokeWidth="1.3" strokeDasharray="2 1" /><circle cx="11" cy="11.5" r="2.8" stroke="#aaa" /><circle cx="12.5" cy="8.5" r="1.7" fill="#0c0" /><circle cx="7.5" cy="13" r="1.7" fill="#0c0" /><circle cx="12" cy="16.5" r="1.7" fill="#e00" /></Dark></Tool>
          <Tool><Dark soft><rect x="4" y="6.5" width="14" height="10.5" fill="#98a898" /><path d="M5 8h2M10 10h1.500M14.500 12h2M6 14h1.500" stroke="#c03030" strokeWidth="1.7" /><path d="M12 8h4M5 11h3M10 14h3M15 15h2" stroke="#18b818" strokeWidth="2" /></Dark></Tool>
          <Tool><Dark soft><path d="M5 17v-7M8 17v-5M14 17v-3M17.500 17V8" stroke="#00f020" strokeWidth="2.1" /><path d="M11 17v-4" stroke="#20d8ff" strokeWidth="2" /></Dark></Tool>
          <Tool><Dark soft><path d="M3 6h6l-2 4 2 3-1 4-2-4-3-4zM11 6h8l-1 4-3-1-1 5-2-5zM17 13h2" fill="#aaa" stroke="#eee" strokeWidth=".8" strokeDasharray="2 1" /></Dark></Tool>
          <Tool on><Dark soft><path d="M4.500 8h3M9 8h9M4.500 10.500h3M9 10.500h9M4.500 13h3M9 13h9" stroke="#bbb" strokeWidth="1.1" /><path d="M10 15.700h4" stroke="#0d0" /><path d="M14 15.700h4" stroke="#0cf" /></Dark></Tool>
          <Tool on><Dark soft><path d="M11 5l1.500 3.500L16 7l-1.500 3.500L19 12l-4.500 1 1.500 3.500-3.500-1.300L11 19l-1.500-3.800L6 16.500 7.500 13 3 12l4.500-1.500L6 7l3.500 1.500z" fill="#ddd" /></Dark></Tool>
          <Tool on><Dark soft><path d="M4 8l3 2M8 6l1 2M14 6l-1 2M18 8l-3 2M4 14l3-1M18 14l-3-1M7 17l1.500-2M15 17l-1.500-2M6 8l7 6" stroke="#ddd" strokeWidth="1.5" /></Dark></Tool>
          <Tool on><Dark soft><circle cx="11" cy="11.5" r="5.8" stroke="#ccc" strokeWidth="1.7" strokeDasharray="2.5 1" /><path d="M13 7.500l-2 4 4 2" stroke="#fff" strokeWidth="1.4" /></Dark></Tool>
          <Tool on><Dark soft><path d="M4 8l4 2M11 5.500V9M18 7l-7 6M18 13h-5M4 14h4M7 17.500l2-3M15 17.500l-2-3M11 14v4" stroke="#ddd" strokeWidth="1.4" /></Dark></Tool>
        </Bar>
      </div>
    </div>
  );
}

function ToolRowTwo() {
  return (
    <div className="flex h-[38px] shrink-0 border-b-2 border-b-[#a6a6a6] bg-white">
      <div className="flex w-[1151px] border-t-2 border-t-[#b0b0b0]">
        <Bar className="w-[208px]">
          <Grip />
          <Tool><Plug /></Tool>
          <Drop />
          <Tool><path d="M1.500 15h2.500V5.500h3.500V15H11V5.500h3.500V15H18V5.500h2" stroke="#222" strokeWidth="1.6" /></Tool>
          <Drop />
          <Sep />
          <Tool>
            <path d="M9 8l11 11" stroke="#000" strokeWidth="3" />
            <path d="M9.500 8l2.500 2.500" stroke="#e0d040" strokeWidth="1.3" />
            <path d="M2 3h2M6 1h2M12 3h2M15 1h2M3 8h2M15 7h2M6 5h2M1 11h2" stroke="#a04040" strokeWidth="1.8" />
          </Tool>
          <Tool>
            <ellipse cx="11" cy="11.5" rx="5" ry="6.5" fill={G} />
            <circle cx="11" cy="4.5" r="2.7" fill={G} />
            <path d="M3 3l5 5M19 3l-5 5M1.500 11h19M3 19l5-5M19 19l-5-5" stroke={G} strokeWidth="1.5" />
            <path d="M11 7v8" stroke="#eee" strokeWidth="1.2" />
          </Tool>
          <Tool>
            <path d="M11 0v8" stroke="#000" strokeWidth="2" />
            <path d="M6.800 5.500h8.400L11 9.500z" fill="#000" />
            <path d="M1 18h5.500M15.500 18H21M5 17l3-3.500h6l3 3.500" stroke="#000" strokeWidth="2.2" />
          </Tool>
        </Bar>
        <Bar className="w-[686px]">
          <Grip />
          <Tool><path d="M11 2l7 8.500H4zM4 12.500h14v3.500H4z" fill={G} /></Tool>
          <Sep />
          <Tool><circle cx="11" cy="10" r="6.9" fill="#f00" /></Tool>
          <Sep />
          <Tool flat><path d="M8 3.500v14M14 3.500v14" stroke={G} strokeWidth="3.2" /></Tool>
          <Tool><path d="M4.500 3l13 7-13 7z" fill="#0f0" /></Tool>
          <Drop />
          <Tool><path d="M3 3l8 7-8 7zM11 3l8 7-8 7z" fill="#0f0" /></Tool>
          <Tool><path d="M12.500 3v14L4.500 10zM14 3h3v14h-3z" fill={G} /></Tool>
          <Tool><path d="M4.500 3h3v14h-3zM10 3l8 7-8 7z" fill={G} /></Tool>
          <Tool><path d="M3 3h3v14H3zM6.500 10L13 3.500V8h6v4h-6v4.500z" fill={G} /></Tool>
          <div className="flex w-[374px] shrink-0 items-center pl-[10px]">
            <div className="h-[18px] w-[8px] shrink-0 border-t border-r-2 border-b-2 border-l border-t-white border-r-[#808080] border-b-[#808080] border-l-white bg-[#f0f0f0]" />
            <div className="mb-[3px] h-[3px] w-[346px] border-t-2 border-b border-t-[#6f6f6f] border-b-white" />
          </div>
          <Tool><path d="M16 3h3v14h-3zM15.500 10L9 3.500V8H3v4h6v4.500z" fill={G} /></Tool>
        </Bar>
        <Bar className="w-[257px]">
          <Grip />
          <Tool><Thermo t="H" /></Tool>
          <Tool><Thermo t="W" /></Tool>
          <Tool><Thermo t="C" /></Tool>
          <Tool><MPlus /><path d="M0 14.500h3.500M9 12H6q-2.500 0-2.500 2.500T6 17.500h3M8.500 11v8M8.500 14.500h3.500M13 11.500h2q3 0 3 3T15 18h-2zM18 14.500h4" stroke={G} strokeWidth="2" /></Tool>
          <Tool><MPlus /><path d="M0 12.500h4l2.500-1.500h9l2.500 1.500h4v3.500h-4l-2.500 3h-9L4 16H0z" fill={G} /></Tool>
          <Sep />
          <Tool><Gear /><path d="M1 9h7l2 2v8H1z" fill={G} /><path d="M3.500 14h3v3h-3z" fill="#f0f0f0" /></Tool>
          <Tool><Gear /><rect x="1" y="10" width="10" height="9" rx="1" fill="#dcdcdc" stroke={G} /><path d="M2 12.500h8M2 14.500h8M2 16.500h8" stroke={G} strokeDasharray="1 1" strokeWidth="1.2" /></Tool>
          <Tool><Gear /></Tool>
        </Bar>
      </div>
    </div>
  );
}

/* ---------- status bar ---------- */

function Cell({ className, children }: { className: string; children?: React.ReactNode }) {
  return (
    <div className={`mt-[5px] flex shrink-0 items-center overflow-hidden border-t-2 border-r-2 border-l-2 border-t-[#a9a9a9] border-r-white border-l-[#a9a9a9] whitespace-nowrap ${className}`}>
      {children}
    </div>
  );
}

const SmallPlug = () => (
  <svg className="mr-[5px] ml-px h-[18px] w-[20px] shrink-0" viewBox="0 0 22 20" fill="none">
    <Plug />
  </svg>
);

const menu = [
  ["File", "w-[40px]"], ["Edit", "w-[42px]"], ["View", "w-[49px]"], ["Player", "w-[58px]"],
  ["Receiver", "w-[72px]"], ["Tools", "w-[51px]"], ["Window", "w-[73px]"], ["Help", "w-[50px]"],
];

export default function App() {
  return (
    <div className="flex h-[1080px] w-[1920px] flex-col overflow-hidden bg-[#f0f0f0] font-['Open_Sans','Noto_Sans',sans-serif] text-[15px] text-black">
      <header className="flex h-[29px] shrink-0 items-center justify-between bg-white">
        <div className="flex items-center gap-[5px] pl-[2px]">
          <span className="flex size-5 items-center justify-center rounded-full bg-[#1c1c1c] text-[11px] font-bold text-[#ddd]">P</span>
          <span className="pb-0.5 leading-5 tracking-[-0.5px]">u-center 21.02</span>
        </div>
        <svg className="mr-[24px] h-[20px] w-[138px]" viewBox="0 0 138 20" fill="none" stroke="#000" strokeWidth="1.2">
          <path d="M7 9.500h12M65.500 6.500h9v9h-9zM67.500 6V4h9v9H75M124.500 4l11 11M135.500 4l-11 11" />
        </svg>
      </header>
      <nav className="flex h-[25px] shrink-0 items-center bg-white pb-px pl-[9px] text-[#1a1a1a]">
        {menu.map(([m, w]) => (
          <span key={m} className={`leading-5 tracking-[-0.55px] ${w}`}>
            <span className="underline underline-offset-2">{m[0]}</span>
            {m.slice(1)}
          </span>
        ))}
      </nav>
      <ToolRowOne />
      <ToolRowTwo />
      <main className="flex min-h-0 flex-1">
        <div className="w-[699px] shrink-0 border-t-2 border-l-2 border-t-[#6f6f6f] border-l-[#8a8a8a] bg-[#ababab]" />
        <div className="flex w-[942px] shrink-0 flex-col">
          <Dock className="h-[397px]" body="mb-[4px] ml-1"><Sky /></Dock>
          <Dock className="h-[527px]" body="mb-[2px] ml-1"><WorldMap /></Dock>
        </div>
        <div className="flex flex-1 flex-col">
          <Dock tight className="h-[271px]" body="mb-[3px] ml-[5px]"><DataView /></Dock>
          <Dock tight className="h-[163px]" body="mb-[2px] ml-[5px]"><Compass /></Dock>
          <Dock tight className="h-[163px]" body="mb-[2px] ml-[5px]"><Speed /></Dock>
          <Dock tight className="h-[163px]" body="mb-[2px] ml-[5px]"><Clock /></Dock>
          <Dock tight className="h-[164px]" body="mb-[2px] ml-[5px]"><Bearing /></Dock>
        </div>
      </main>
      <footer className="flex h-[24px] shrink-0 tracking-[-0.3px]">
        <div className="flex w-[958px] shrink-0 items-center pt-[6px] pl-[3px]">Ready</div>
        <Cell className="mr-[32px] w-[282px]"><SmallPlug />NTRIP client: Not connected</Cell>
        <Cell className="mr-[3px] w-[145px] pl-px">u-blox M8/8</Cell>
        <Cell className="mr-[3px] w-[132px]"><SmallPlug />No port open</Cell>
        <Cell className="mr-[3px] w-[157px] tracking-[-0.2px]">No file open</Cell>
        <Cell className="mr-[3px] w-[57px]" />
        <Cell className="mr-[3px] w-[57px] tracking-[-0.95px]">00:08:28</Cell>
        <Cell className="mr-[3px] w-[57px] pl-px">UTC</Cell>
        <Cell className="w-[26px] pl-[4px]">
          <span className="size-[13px] rounded-full border-2 border-[#a0a0a0] bg-[#7a7a7a]" />
        </Cell>
      </footer>
      <div className="h-[2px] shrink-0 bg-[#404040] pl-[1132px]">
        <div className="h-full w-[61px] bg-[#777777]" />
      </div>
    </div>
  );
}
